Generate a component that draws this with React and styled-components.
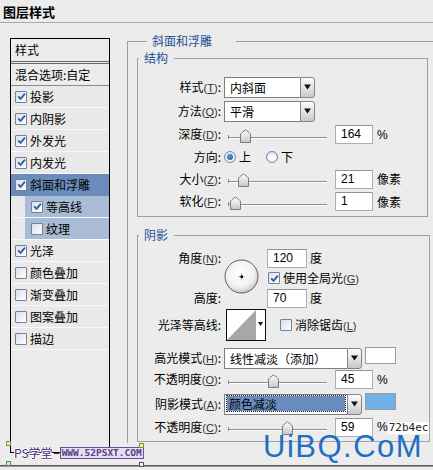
import React from "react";
import styled, { createGlobalStyle } from "styled-components";

const GlobalStyle = createGlobalStyle`
  html, body {
    margin: 0;
    padding: 0;
    background: #ececec;
  }
  body {
    font-family: "Noto Sans CJK SC", "Liberation Sans", sans-serif;
    font-size: 12px;
    color: #000;
  }
`;

const LINE = "#9f9f9f";

const Dialog = styled.div`
  position: relative;
  width: 433px;
  height: 470px;
  overflow: hidden;
  background: #ececec;
`;

const TitleBar = styled.div`
  height: 23px;
  box-sizing: border-box;
  border-bottom: 1px solid #a9a9a9;
  padding: 2px 0 0 3px;
  font-size: 13px;
  font-weight: bold;
  line-height: 20px;
`;

const Main = styled.div`
  display: flex;
  height: 443px;
  box-sizing: border-box;
  border-bottom: 1px solid #5a5a5a;
  box-shadow: 0 1px 0 #9a9a9a;
`;

/* ---------- left style list ---------- */

const LeftCol = styled.div`
  padding: 15px 0 0 10px;
  width: 127px;
  flex: none;
  box-sizing: border-box;
`;

const ListBox = styled.div`
  width: 100px;
  height: 415px;
  box-sizing: border-box;
  border: 1px solid #000;
  background: #ececec;
`;

const ListHeader = styled.div`
  height: 25px;
  box-sizing: border-box;
  padding-left: 4px;
  line-height: 22px;
  border-bottom: 3px double #6a6a6a;
`;

const BlendRow = styled.div`
  height: 22px;
  box-sizing: border-box;
  padding-left: 4px;
  line-height: 21px;
  border-bottom: 1px solid #8a8a8a;
`;

const Item = styled.div`
  display: flex;
  align-items: center;
  height: 22px;
  box-sizing: border-box;
  padding-left: ${(p) => (p.$sub ? 20 : 4)}px;
  border-bottom: 1px solid ${(p) => (p.$selected ? "#6b8cba" : "#f9f9f9")};
  background: ${(p) =>
    p.$selected
      ? "#6b8cba"
      : p.$sub
      ? "linear-gradient(to right, #e9e9e9 14px, #a9bcd6 14px)"
      : "#e9e9e9"};
`;

const ItemText = styled.span`
  margin-left: 3px;
  line-height: 21px;
`;

const CheckBox = styled.span`
  display: inline-flex;
  align-items: center;
  justify-content: center;
  width: 12px;
  height: 12px;
  box-sizing: border-box;
  border: 1px solid #6f819d;
  border-radius: 1px;
  background: linear-gradient(135deg, #d9e0e9, #ffffff);
  flex: none;
`;

const Check = ({ on }) => (
  <CheckBox>
    {on && (
      <svg width="9" height="9" viewBox="0 0 9 9">
        <path d="M1.2 4.3 L3.6 6.8 L7.9 1.6" fill="none" stroke="#2f5c9c" strokeWidth="1.8" />
      </svg>
    )}
  </CheckBox>
);

/* ---------- right panel ---------- */

const RightCol = styled.div`
  flex: 1;
  padding-top: 10px;
`;

const OuterSet = styled.fieldset`
  margin: 0;
  padding: 0 0 0 9px;
  border: none;
  border-top: 1px solid ${LINE};
  border-left: 1px solid ${LINE};
  height: 410px;
  box-sizing: border-box;
`;

const Legend = styled.legend`
  margin-left: ${(p) => (p.$inner ? 1 : 10)}px;
  padding: ${(p) => (p.$inner ? "0 6px 0 5px" : "0 24px 0 5px")};
  line-height: 16px;
  font-size: 12px;
  color: #1d5293;
`;

const GroupSet = styled.fieldset`
  margin: ${(p) => p.$mt}px 0 0 0;
  width: 291px;
  box-sizing: border-box;
  border: 1px solid ${LINE};
  padding: ${(p) => p.$pt}px 0 3px 0;
`;

const Row = styled.div`
  display: flex;
  align-items: center;
  height: ${(p) => p.$h}px;
  margin-top: ${(p) => p.$mt || 0}px;
`;

const Label = styled.span`
  width: 86px;
  flex: none;
  box-sizing: border-box;
  padding-right: 3px;
  text-align: right;
  white-space: nowrap;
  line-height: 16px;
`;

const Key = styled.span`
  font-family: "Liberation Sans", sans-serif;
  font-size: 11px;
  color: #333;
  text-decoration: underline;
`;

const Paren = styled.span`
  font-family: "Liberation Sans", sans-serif;
  font-size: 11px;
  color: #333;
`;

const Hot = ({ k }) => (
  <>
    <Paren>(</Paren>
    <Key>{k}</Key>
    <Paren>)</Paren>
  </>
);

const SelectBox = styled.div`
  display: flex;
  width: ${(p) => p.$w}px;
  height: 21px;
  flex: none;
`;

const SelectField = styled.div`
  flex: 1;
  box-sizing: border-box;
  border: 1px solid #7d7d7d;
  border-right: none;
  background: #fff;
  padding: 0 5px;
  line-height: 19px;
  white-space: nowrap;
  overflow: hidden;
`;

const Highlight = styled.div`
  margin: 1px -3px 0 -3px;
  padding-left: 2px;
  line-height: 15px;
  background: #6a8cbf;
  outline: 1px dotted #1a1a1a;
`;

const SelectArrow = styled.div`
  width: 15px;
  box-sizing: border-box;
  border: 1px solid #858585;
  border-radius: 0 3px 3px 0;
  background: linear-gradient(#fdfdfd, #c9c9c9);
  display: flex;
  align-items: center;
  justify-content: center;
`;

const Triangle = () => (
  <svg width="7" height="6" viewBox="0 0 7 6">
    <path d="M0 0.5 H7 L3.5 5.5 Z" fill="#111" />
  </svg>
);

const Select = ({ w, value, highlight }) => (
  <SelectBox $w={w}>
    <SelectField>{highlight ? <Highlight>{value}</Highlight> : value}</SelectField>
    <SelectArrow>
      <Triangle />
    </SelectArrow>
  </SelectBox>
);

const SliderBox = styled.div`
  position: relative;
  width: 111px;
  height: 22px;
  flex: none;
`;

const Track = styled.div`
  position: absolute;
  left: 4px;
  top: 13px;
  width: 99px;
  height: 1px;
  background: #8d8d8d;
  border-bottom: 1px solid #fff;
  &::before {
    content: "";
    position: absolute;
    left: 0;
    top: -2px;
    width: 1px;
    height: 4px;
    background: #8d8d8d;
  }
`;

const Thumb = styled.svg`
  position: absolute;
  top: 5px;
`;

const Slider = ({ pos }) => (
  <SliderBox>
    <Track />
    <Thumb width="11" height="14" viewBox="0 0 11 14" style={{ left: 4 + pos - 5.5 }}>
      <defs>
        <linearGradient id={`tg${pos}`} x1="0" y1="0" x2="0" y2="1">
          <stop offset="0" stopColor="#ffffff" />
          <stop offset="1" stopColor="#c6c6c6" />
        </linearGradient>
      </defs>
      <path
        d="M0.5 13.5 V6 Q0.5 4.5 2 3.5 L5.5 0.8 L9 3.5 Q10.5 4.5 10.5 6 V13.5 Z"
        fill={`url(#tg${pos})`}
        stroke="#7b7b7b"
      />
    </Thumb>
  </SliderBox>
);

const NumBox = styled.div`
  width: ${(p) => p.$w || 38}px;
  height: 19px;
  box-sizing: border-box;
  flex: none;
  border: 1px solid #a9afb7;
  border-top-color: #8e949c;
  background: #fff;
  padding-left: 5px;
  font-family: "Liberation Sans", sans-serif;
  font-size: 12px;
  line-height: 17px;
`;

const Unit = styled.span`
  margin-left: ${(p) => p.$ml ?? 4}px;
  font-family: ${(p) => (p.$latin ? '"Liberation Sans", sans-serif' : "inherit")};
  line-height: 16px;
`;

const HexTag = styled.span`
  font-family: "DejaVu Sans Mono", monospace;
  font-size: 11px;
  line-height: 12px;
  background: #fff;
  color: #222;
  padding: 0 1px;
  margin-top: 2px;
`;

const RadioDot = styled.span`
  width: 12px;
  height: 12px;
  box-sizing: border-box;
  border-radius: 50%;
  border: 1px solid #7189ad;
  background: radial-gradient(circle at 50% 60%, #ffffff 20%, #c7d8ee 100%);
  display: inline-flex;
  align-items: center;
  justify-content: center;
  flex: none;
  &::after {
    content: "";
    display: ${(p) => (p.$on ? "block" : "none")};
    width: 6px;
    height: 6px;
    border-radius: 50%;
    background: radial-gradient(circle at 40% 35%, #6f95cc, #244f8c);
  }
`;

const Choice = styled.span`
  display: inline-flex;
  align-items: center;
  margin-right: ${(p) => p.$mr || 0}px;
`;

const ChoiceText = styled.span`
  margin-left: 3px;
  line-height: 16px;
`;

const AngleGrid = styled.div`
  display: grid;
  grid-template-columns: 86px 35px 8px auto;
  grid-template-rows: 20px 20px 20px;
  grid-template-areas:
    "l1 dial . f1"
    ". dial . f2"
    "l3 dial . f3";
  align-items: center;
  margin-top: 5px;
`;

const Area = styled.div`
  grid-area: ${(p) => p.$a};
  display: flex;
  align-items: center;
`;

const DialWrap = styled.div`
  grid-area: dial;
  width: 35px;
  height: 35px;
  margin-bottom: 4px;
`;

const Dial = () => (
  <DialWrap>
    <svg width="35" height="35" viewBox="0 0 35 35">
      <defs>
        <radialGradient id="dialg" cx="0.45" cy="0.4" r="0.6">
          <stop offset="0" stopColor="#ffffff" />
          <stop offset="0.7" stopColor="#f1f1f1" />
          <stop offset="1" stopColor="#c9c9c9" />
        </radialGradient>
      </defs>
      <circle cx="17.5" cy="17.5" r="16.5" fill="url(#dialg)" stroke="#5e5e5e" />
      <path d="M17.5 14.5 V20.5 M14.5 17.5 H20.5" stroke="#9a9a9a" strokeWidth="1" />
      <rect x="16.5" y="16.5" width="2.5" height="2.5" fill="#000" />
    </svg>
  </DialWrap>
);

const ContourPick = styled.div`
  display: flex;
  width: 40px;
  height: 32px;
  box-sizing: border-box;
  border: 1px solid #111;
  background: #fff;
  margin-left: 2px;
  flex: none;
`;

const ContourArrow = styled.div`
  flex: 1;
  display: flex;
  align-items: center;
  justify-content: center;
  padding-bottom: 2px;
`;

const Contour = () => (
  <ContourPick>
    <svg width="29" height="30" viewBox="0 0 29 30">
      <path d="M29 0 V30 H0 Z" fill="#a7a7a7" />
    </svg>
    <ContourArrow>
      <svg width="5" height="4" viewBox="0 0 5 4">
        <path d="M0 0 H5 L2.5 4 Z" fill="#111" />
      </svg>
    </ContourArrow>
  </ContourPick>
);

const Swatch = styled.div`
  width: 31px;
  height: ${(p) => p.$h}px;
  box-sizing: border-box;
  margin-left: 3px;
  border: 1px solid #9a9a9a;
  background: ${(p) => p.$color};
  align-self: flex-start;
  margin-top: 1px;
  flex: none;
`;

const CheckLabel = styled.span`
  display: inline-flex;
  align-items: center;
  margin-left: ${(p) => p.$ml || 0}px;
`;

/* ---------- overlays ---------- */

const SiteMark = styled.div`
  position: absolute;
  left: 263px;
  top: 436px;
  font-family: "Liberation Sans", Arial, sans-serif;
  font-size: 31px;
  line-height: 21px;
  letter-spacing: 1.5px;
  color: #1e6fc6;
  white-space: nowrap;
`;

const PsMark = styled.div`
  position: absolute;
  left: 14px;
  top: 446px;
  display: flex;
  align-items: center;
`;

const PsText = styled.span`
  font-size: 12px;
  line-height: 14px;
  color: #4a2b7c;
  text-shadow: 1px 0 #fff, -1px 0 #fff, 0 1px #fff, 0 -1px #fff;
`;

const PsDash = styled.span`
  width: 5px;
  height: 1px;
  background: #333;
  margin: 0 1px;
`;

const PsUrl = styled.span`
  font-family: "DejaVu Sans Mono", monospace;
  font-weight: bold;
  font-size: 9.5px;
  line-height: 10px;
  color: #5a3b8c;
  background: #e6dff0;
  border: 1px solid #6a4c98;
  padding: 0 1px;
`;

const Corner = styled.span`
  position: absolute;
  left: ${(p) => p.$x}px;
  top: ${(p) => p.$y}px;
  width: 5px;
  height: 5px;
  box-sizing: border-box;
  border: 1px solid ${(p) => p.$c};
  background: ${(p) => p.$bg};
`;

export default function App() {
  return (
    <>
      <GlobalStyle />
      <Dialog>
        <TitleBar>图层样式</TitleBar>
        <Main>
          <LeftCol>
            <ListBox>
              <ListHeader>样式</ListHeader>
              <BlendRow>混合选项:自定</BlendRow>
              {[
                ["投影", true],
                ["内阴影", true],
                ["外发光", true],
                ["内发光", true],
              ].map(([t, on]) => (
                <Item key={t}>
                  <Check on={on} />
                  <ItemText>{t}</ItemText>
                </Item>
              ))}
              <Item $selected>
                <Check on />
                <ItemText>斜面和浮雕</ItemText>
              </Item>
              <Item $sub>
                <Check on />
                <ItemText>等高线</ItemText>
              </Item>
              <Item $sub>
                <Check />
                <ItemText>纹理</ItemText>
              </Item>
              {[
                ["光泽", true],
                ["颜色叠加", false],
                ["渐变叠加", false],
                ["图案叠加", false],
                ["描边", false],
              ].map(([t, on]) => (
                <Item key={t}>
                  <Check on={on} />
                  <ItemText>{t}</ItemText>
                </Item>
              ))}
            </ListBox>
          </LeftCol>

          <RightCol>
            <OuterSet>
              <Legend>斜面和浮雕</Legend>

              <GroupSet $mt={1} $pt={9}>
                <Legend $inner>结构</Legend>
                <Row $h={24}>
                  <Label>
                    样式<Hot k="T" />:
                  </Label>
                  <Select w={91} value="内斜面" />
                </Row>
                <Row $h={24}>
                  <Label>
                    方法<Hot k="Q" />:
                  </Label>
                  <Select w={91} value="平滑" />
                </Row>
                <Row $h={23}>
                  <Label>
                    深度<Hot k="D" />:
                  </Label>
                  <Slider pos={17} />
                  <NumBox>164</NumBox>
                  <Unit $latin>%</Unit>
                </Row>
                <Row $h={22}>
                  <Label>方向:</Label>
                  <Choice $mr={15}>
                    <RadioDot $on />
                    <ChoiceText>上</ChoiceText>
                  </Choice>
                  <Choice>
                    <RadioDot />
                    <ChoiceText>下</ChoiceText>
                  </Choice>
                </Row>
                <Row $h={22}>
                  <Label>
                    大小<Hot k="Z" />:
                  </Label>
                  <Slider pos={15} />
                  <NumBox>21</NumBox>
                  <Unit>像素</Unit>
                </Row>
                <Row $h={23}>
                  <Label>
                    软化<Hot k="F" />:
                  </Label>
                  <Slider pos={7} />
                  <NumBox>1</NumBox>
                  <Unit>像素</Unit>
                </Row>
              </GroupSet>

              <GroupSet $mt={10} $pt={0}>
                <Legend $inner>阴影</Legend>
                <AngleGrid>
                  <Area $a="l1">
                    <Label>
                      角度<Hot k="N" />:
                    </Label>
                  </Area>
                  <Dial />
                  <Area $a="f1">
                    <NumBox $w={40}>120</NumBox>
                    <Unit $ml={3}>度</Unit>
                  </Area>
                  <Area $a="f2">
                    <CheckLabel $ml={1}>
                      <Check on />
                      <ChoiceText>
                        使用全局光<Hot k="G" />
                      </ChoiceText>
                    </CheckLabel>
                  </Area>
                  <Area $a="l3">
                    <Label>高度:</Label>
                  </Area>
                  <Area $a="f3">
                    <NumBox $w={40}>70</NumBox>
                    <Unit $ml={3}>度</Unit>
                  </Area>
                </AngleGrid>
                <Row $h={34}>
                  <Label>光泽等高线:</Label>
                  <Contour />
                  <CheckLabel $ml={14}>
                    <Check />
                    <ChoiceText>
                      消除锯齿<Hot k="L" />
                    </ChoiceText>
                  </CheckLabel>
                </Row>
                <Row $h={24} $mt={4}>
                  <Label>
                    高光模式<Hot k="H" />:
                  </Label>
                  <Select w={138} value="线性减淡（添加）" />
                  <Swatch $color="#ffffff" $h={17} />
                </Row>
                <Row $h={19}>
                  <Label>
                    不透明度<Hot k="O" />:
                  </Label>
                  <Slider pos={45} />
                  <NumBox>45</NumBox>
                  <Unit $latin>%</Unit>
                </Row>
                <Row $h={24} $mt={3}>
                  <Label>
                    阴影模式<Hot k="A" />:
                  </Label>
                  <Select w={138} value="颜色减淡" highlight />
                  <Swatch $color="#72b0e8" $h={17} />
                </Row>
                <Row $h={22}>
                  <Label>
                    不透明度<Hot k="C" />:
                  </Label>
                  <Slider pos={59} />
                  <NumBox>59</NumBox>
                  <Unit $latin>%</Unit>
                  <HexTag>72b4ec</HexTag>
                </Row>
              </GroupSet>
            </OuterSet>
          </RightCol>
        </Main>

        <SiteMark>UiBQ.CoM</SiteMark>
        <PsMark>
          <PsText>PS学堂</PsText>
          <PsDash />
          <PsUrl>WWW.52PSXT.COM</PsUrl>
        </PsMark>
        <Corner $x={6} $y={441} $c="#8a8a3a" $bg="#f0f0b0" />
        <Corner $x={6} $y={461} $c="#5a8a4a" $bg="#d8f0c8" />
        <Corner $x={139} $y={443} $c="#8a8a3a" $bg="#f0f0b0" />
        <Corner $x={139} $y={462} $c="#555" $bg="#eee" />
      </Dialog>
    </>
  );
}
